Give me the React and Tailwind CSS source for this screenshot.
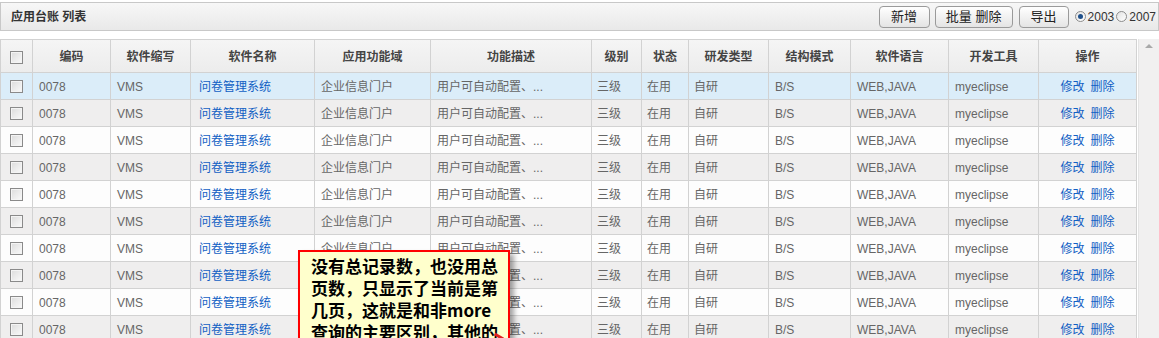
import React from 'react';

/* ── column set for the ledger table ── */
const COLUMNS = [
  { key: 'check', title: '', width: 32 },
  { key: 'code', title: '编码', width: 78 },
  { key: 'abbr', title: '软件缩写', width: 80 },
  { key: 'name', title: '软件名称', width: 124 },
  { key: 'domain', title: '应用功能域', width: 116 },
  { key: 'desc', title: '功能描述', width: 161 },
  { key: 'level', title: '级别', width: 50 },
  { key: 'status', title: '状态', width: 47 },
  { key: 'devType', title: '研发类型', width: 80 },
  { key: 'arch', title: '结构模式', width: 82 },
  { key: 'lang', title: '软件语言', width: 98 },
  { key: 'tool', title: '开发工具', width: 90 },
  { key: 'ops', title: '操作', width: 98 },
];

const ROW = {
  code: '0078',
  abbr: 'VMS',
  name: '问卷管理系统',
  domain: '企业信息门户',
  desc: '用户可自动配置、...',
  level: '三级',
  status: '在用',
  devType: '自研',
  arch: 'B/S',
  lang: 'WEB,JAVA',
  tool: 'myeclipse',
};

const ROWS = Array.from({ length: 11 }, () => ROW);

function Checkbox() {
  return (
    <span className="inline-block w-[13px] h-[13px] border border-[#8a8a8a] bg-gradient-to-br from-[#dcdcdc] to-[#fafafa] align-middle shadow-[inset_0_0_0_1px_#f4f4f4]" />
  );
}

function Radio({ checked }) {
  return (
    <span className="inline-flex items-center justify-center w-[11px] h-[11px] rounded-full border border-[#8c8c8c] bg-gradient-to-br from-[#e2e2e2] to-white">
      {checked && <span className="w-[5px] h-[5px] rounded-full bg-[#1e4f8a]" />}
    </span>
  );
}

function Btn({ children, className = '' }) {
  return (
    <button className={`h-[22px] rounded-[4px] border border-[#9a9a9a] bg-gradient-to-b from-white to-[#e4e4e4] text-[13px] text-[#222] leading-none ${className}`}>
      {children}
    </button>
  );
}

export default function App() {
  return (
    <div className="relative w-[1159px] h-[338px] overflow-hidden bg-white text-[12px] font-['Liberation_Sans','Noto_Sans_CJK_SC',sans-serif]">
      {/* Title bar */}
      <div className="mt-[2px] h-[29px] border border-[#c8c8c8] bg-gradient-to-b from-[#f7f7f7] to-[#e9e9e9] flex items-center pl-[10px] pr-[2px]">
        <span className="font-bold text-[#333]">应用台账 列表</span>
        <div className="ml-auto flex items-center gap-[5px]">
          <Btn className="w-[51px]">新增</Btn>
          <Btn className="w-[78px]">批量 删除</Btn>
          <Btn className="w-[50px] ml-[1px]">导出</Btn>
          <div className="flex items-center gap-[2px] text-[#333] ml-[1px]">
            <Radio checked />
            <span>2003</span>
            <Radio />
            <span>2007</span>
          </div>
        </div>
      </div>

      {/* Table + scrollbar */}
      <div className="mt-[8px] flex">
        <table className="table-fixed border-collapse w-[1138px]">
          <colgroup>
            {COLUMNS.map((c) => (
              <col key={c.key} style={{ width: c.width }} />
            ))}
          </colgroup>
          <thead>
            <tr className="h-[33px] bg-gradient-to-b from-[#f5f5f5] to-[#ececec]">
              {COLUMNS.map((c) => (
                <th key={c.key} className="border border-[#d2d2d2] font-bold text-[#444] text-center p-0 pt-[1px]">
                  {c.key === 'check' ? <Checkbox /> : c.title}
                </th>
              ))}
            </tr>
          </thead>
          <tbody>
            {ROWS.map((r, idx) => (
              <tr
                key={idx}
                className={`h-[27px] ${idx === 0 ? 'bg-[#dbedf9]' : idx % 2 === 1 ? 'bg-[#efeeee]' : 'bg-[#fdfdfd]'}`}
              >
                <td className="border border-[#d2d2d2] text-center p-0"><Checkbox /></td>
                <td className="border border-[#d2d2d2] px-[6px] pt-[1px] text-[#666]">{r.code}</td>
                <td className="border border-[#d2d2d2] px-[6px] pt-[1px] text-[#666]">{r.abbr}</td>
                <td className="border border-[#d2d2d2] px-[8px] pt-[1px] text-[#1160c4]">{r.name}</td>
                <td className="border border-[#d2d2d2] px-[6px] pt-[1px] text-[#666]">{r.domain}</td>
                <td className="border border-[#d2d2d2] px-[6px] pt-[1px] text-[#666] whitespace-nowrap">{r.desc}</td>
                <td className="border border-[#d2d2d2] px-[5px] pt-[1px] text-[#666]">{r.level}</td>
                <td className="border border-[#d2d2d2] px-[5px] pt-[1px] text-[#666]">{r.status}</td>
                <td className="border border-[#d2d2d2] px-[5px] pt-[1px] text-[#666]">{r.devType}</td>
                <td className="border border-[#d2d2d2] px-[6px] pt-[1px] text-[#666]">{r.arch}</td>
                <td className="border border-[#d2d2d2] px-[6px] pt-[1px] text-[#666]">{r.lang}</td>
                <td className="border border-[#d2d2d2] px-[6px] pt-[1px] text-[#666]">{r.tool}</td>
                <td className="border border-[#d2d2d2] text-center pt-[1px] text-[#1160c4]">
                  修改<span className="ml-[6px]">删除</span>
                </td>
              </tr>
            ))}
          </tbody>
        </table>

        {/* Scroll track */}
        <div className="w-[21px] ml-[1px] bg-[#f1f0f0] border-l border-[#e4e4e4] flex justify-center pt-[5px]">
          <span className="w-0 h-0 border-x-[4px] border-x-transparent border-b-[4px] border-b-[#a9a9a9]" />
        </div>
      </div>

      {/* Callout note */}
      <div className="absolute left-[298px] top-[250px] w-[212px] h-[110px] bg-[#ffffcc] border-2 border-[#ff0000] shadow-[4px_4px_5px_rgba(0,0,0,0.35)] pl-[11px] pt-[3px]">
        <p className="text-[17px] leading-[22px] font-bold text-black font-['Noto_Sans_CJK_SC',sans-serif]">
          没有总记录数，也没用总
          <br />
          页数，只显示了当前是第
          <br />
          几页，这就是和非more
          <br />
          查询的主要区别，其他的
          <br />
          都一样
        </p>
        <span className="absolute right-[4px] bottom-[20px] w-[10px] h-[3px] bg-[#e02020] rotate-[30deg]" />
      </div>
    </div>
  );
}
